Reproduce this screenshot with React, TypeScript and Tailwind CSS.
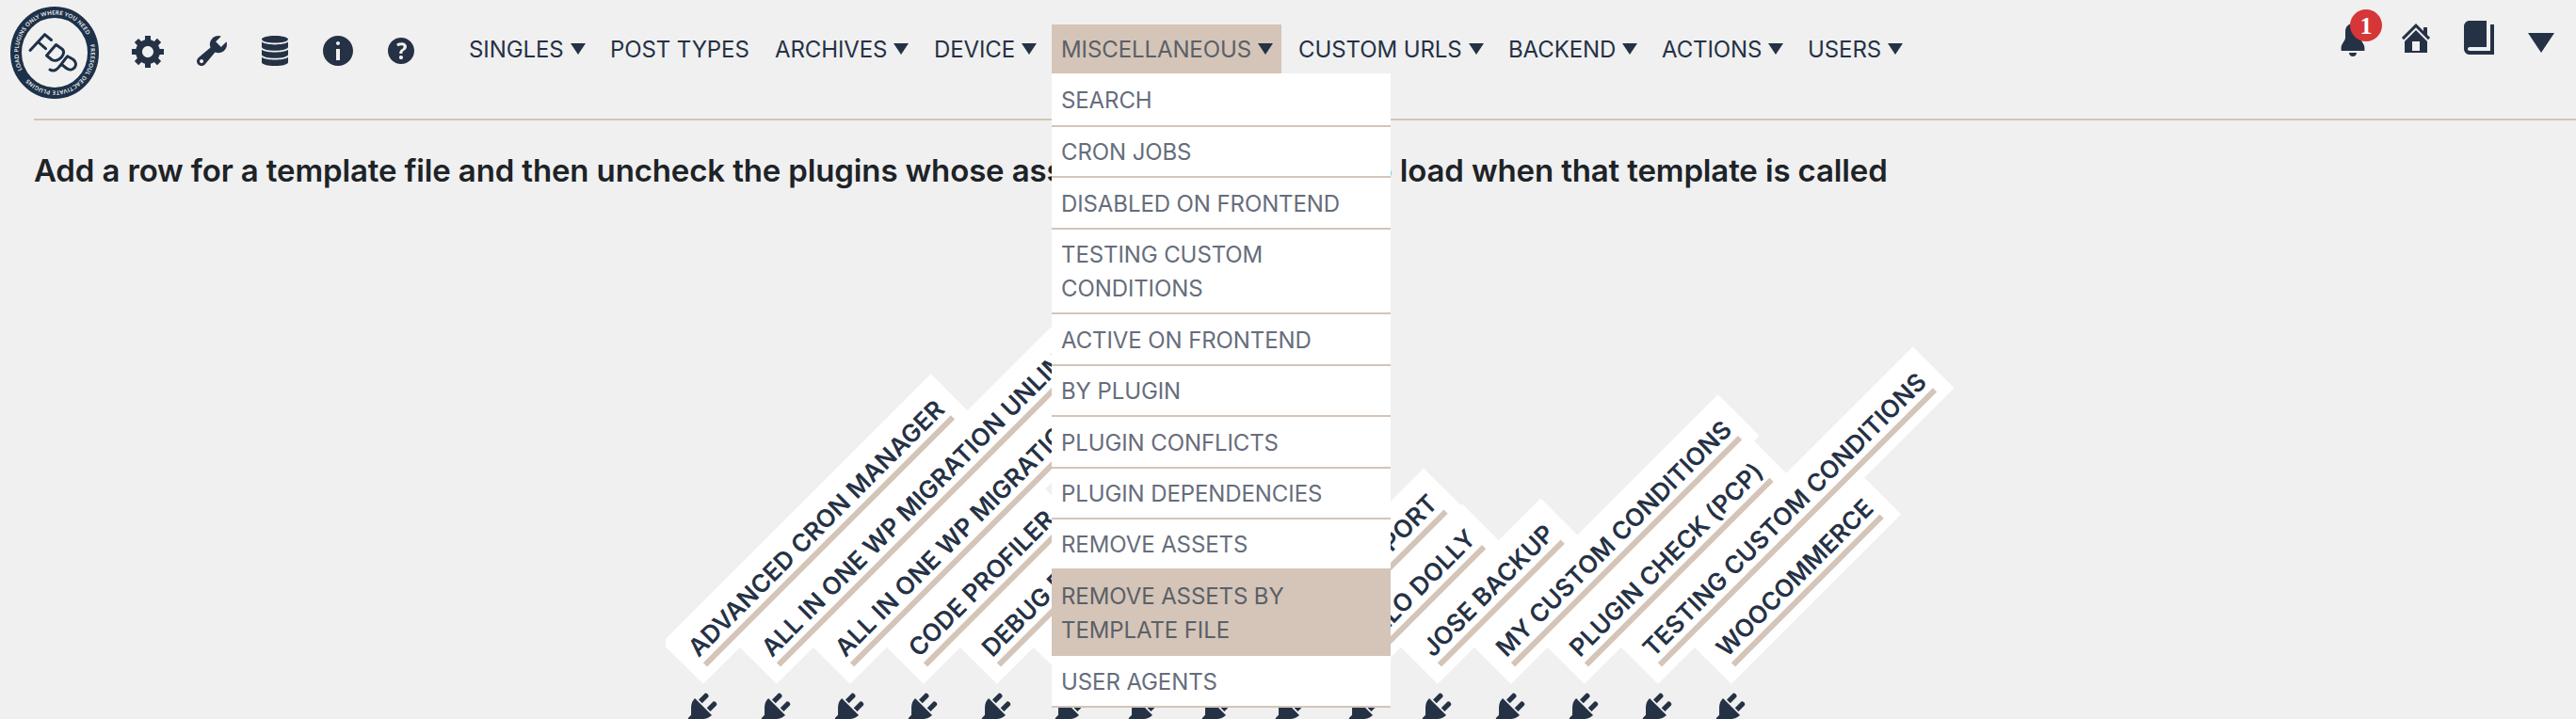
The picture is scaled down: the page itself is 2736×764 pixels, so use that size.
import type { ReactNode } from 'react'

const icons = {
  gear: 'M18 12h-2.18c-.17.7-.44 1.35-.81 1.93l1.54 1.54-2.1 2.1-1.54-1.54c-.58.36-1.23.63-1.91.79V19H8v-2.18c-.68-.16-1.33-.43-1.91-.79l-1.54 1.54-2.12-2.12 1.54-1.54c-.36-.58-.63-1.23-.79-1.91H1V9.03h2.17c.16-.7.44-1.35.8-1.94L2.43 5.55l2.1-2.1 1.54 1.54c.58-.37 1.24-.64 1.93-.81V2h3v2.18c.68.16 1.33.43 1.91.79l1.54-1.54 2.12 2.12-1.54 1.54c.36.59.64 1.24.8 1.94H18V12zm-8.5 1.5c1.66 0 3-1.34 3-3s-1.34-3-3-3-3 1.34-3 3 1.34 3 3 3z',
  wrench: 'M16.68 9.77c-1.34 1.34-3.3 1.67-4.95.99l-5.41 6.52c-.99.99-2.59.99-3.58 0s-.99-2.59 0-3.57l6.52-5.42c-.68-1.65-.35-3.61.99-4.95 1.28-1.28 3.12-1.62 4.72-1.06l-2.89 2.89 2.82 2.82 2.86-2.87c.53 1.58.18 3.39-1.08 4.65zM3.81 16.21c.4.39 1.04.39 1.43 0 .4-.4.4-1.04 0-1.43-.39-.4-1.03-.4-1.43 0-.39.39-.39 1.03 0 1.43z',
  database: 'M10 2c3.9 0 7 .85 7 1.9S13.900 5.8 10 5.8 3 4.950 3 3.900 6.100 2 10 2zM3 5.300C4.200 6.200 6.900 6.700 10 6.700s5.800-.5 7-1.400V8c0 1.050-3.100 1.900-7 1.900S3 9.050 3 8zM3 9.400c1.200.9 3.900 1.400 7 1.400s5.800-.5 7-1.400V12c0 1.050-3.100 1.900-7 1.900S3 13.050 3 12zM3 13.400c1.200.9 3.900 1.400 7 1.400s5.800-.5 7-1.400v2.700c0 1.050-3.100 1.900-7 1.900s-7-.85-7-1.900z',
  info: 'M10 2c4.420 0 8 3.580 8 8s-3.580 8-8 8-8-3.580-8-8 3.580-8 8-8zm1 4c0-.55-.45-1-1-1s-1 .45-1 1 .45 1 1 1 1-.45 1-1zm0 9V9H9v6h2z',
  help: 'M17 10c0-3.870-3.140-7-7-7-3.870 0-7 3.130-7 7s3.130 7 7 7c3.860 0 7-3.130 7-7zm-6.300 1.480H9.140v-.43c0-.38.08-.7.24-.98s.46-.57.88-.89c.41-.29.68-.53.81-.71.14-.18.2-.39.2-.62 0-.25-.09-.44-.28-.58-.19-.13-.45-.19-.79-.19-.58 0-1.250.19-2 .57l-.64-1.280c.87-.49 1.800-.74 2.770-.74.81 0 1.450.2 1.920.58.48.39.71.91.71 1.550 0 .43-.09.8-.29 1.110-.19.32-.57.67-1.110 1.060-.38.28-.61.49-.71.63-.1.15-.15.34-.15.57v.35zm-1.470 2.740c-.18-.17-.27-.42-.27-.73 0-.33.08-.58.26-.75s.43-.25.77-.25c.32 0 .57.09.75.26s.27.42.27.74c0 .3-.09.55-.27.72-.18.18-.43.27-.75.27-.33 0-.58-.09-.76-.26z',
  bell: 'M10 2.500c-2.500 0-4 1.800-4 4.500v3c0 1.500-2.200 3.500-2.200 5.200V17h12.400v-1.800c0-1.700-2.200-3.700-2.200-5.200V7c0-2.700-1.500-4.500-4-4.500zM8 18c0 1.200.9 2 2 2s2-.8 2-2z',
  home: 'M16 8.500l1.530 1.530-1.060 1.060L10 4.600l-6.470 6.490-1.060-1.060L10 2.500l4 4v-2h2v4zm-6-2.460l6 5.990V18H4v-5.970zM12 17v-5H8v5h4z',
  book: 'M16 3h2v16H5c-1.660 0-3-1.340-3-3V4c0-1.660 1.340-3 3-3h9v14H5c-.55 0-1 .45-1 1s.45 1 1 1h11V3z',
  plug: 'M13.110 4.360L9.870 7.600 8 5.730l3.240-3.240c.35-.34 1.050-.2 1.560.32.52.51.66 1.210.31 1.550zm-8 1.770l.91-1.120 9.010 9.010-1.190.84c-.71.71-2.630 1.160-3.820 1.160H6.140L4.900 17.260c-.59.59-1.540.59-2.120 0-.59-.58-.59-1.530 0-2.120l1.240-1.240v-3.880c0-1.130.4-3.190 1.090-3.890zm7.260 3.970l3.240-3.240c.34-.35 1.040-.21 1.550.31.52.51.66 1.210.31 1.550l-3.240 3.250z',
}

function Icon({ name, className = '' }: { name: keyof typeof icons; className?: string }) {
  return (
    <svg viewBox="0 0 20 20" className={`size-10 shrink-0 overflow-visible ${className}`} fill="currentColor" fillRule="evenodd">
      <path d={icons[name]} />
    </svg>
  )
}

function Caret({ className = 'w-4 h-3' }: { className?: string }) {
  return (
    <svg viewBox="0 0 16 12" className={`shrink-0 ${className}`} fill="#253145" preserveAspectRatio="none">
      <path d="M0 0h16L8 12z" />
    </svg>
  )
}

function Logo() {
  return (
    <svg viewBox="0 0 94 98" className="ml-[11px] mt-[7px] w-[94px] h-[98px] shrink-0" fill="none">
      <ellipse cx="47" cy="49" rx="41" ry="43" stroke="#1d3149" strokeWidth="12" />
      <defs>
        <path
          id="ring"
          d="M12.600 67.100A38.500 40.500 0 0 1 47 8.500A38.500 40.500 0 0 1 47 89.500A38.500 40.500 0 0 1 12.600 67.100"
        />
      </defs>
      <g fill="#efefef" fontSize="6" fontWeight="700" fontFamily="Lato, sans-serif">
        <text textLength="123">
          <textPath href="#ring">LOAD PLUGINS ONLY WHERE YOU NEED</textPath>
        </text>
        <text textLength="102">
          <textPath href="#ring" startOffset="134">FREESOUL DEACTIVATE PLUGINS</textPath>
        </text>
      </g>
      <g stroke="#1d3149" strokeWidth="3" strokeLinecap="round" strokeLinejoin="round">
        <path d="M21 46.500L36.500 29.700L43.500 35.500M30.500 38.500L37.500 44.700" />
        <path d="M48.500 40.500L38.500 52L44 56.500C51 60.500 61 49 54.500 44.800Z" />
        <path d="M42 67C49 71.500 53 61.500 60.700 52.800L66.500 56C74 61.500 66 70.500 59.500 65.500L54.500 61.500" />
      </g>
    </svg>
  )
}

const menu = [
  { label: 'SINGLES', w: 'w-[150px]' },
  { label: 'POST TYPES', w: 'w-[175px]', plain: true },
  { label: 'ARCHIVES', w: 'w-[169px]' },
  { label: 'DEVICE', w: 'w-[136px]' },
  { label: 'MISCELLANEOUS', w: 'w-[251px]', active: true },
  { label: 'CUSTOM URLS', w: 'w-[223px]' },
  { label: 'BACKEND', w: 'w-[163px]' },
  { label: 'ACTIONS', w: 'w-[155px]' },
  { label: 'USERS', w: 'w-[122px]' },
]

const dropdown = [
  { label: 'SEARCH', h: 'h-[57px]' },
  { label: 'CRON JOBS', h: 'h-[54px]' },
  { label: 'DISABLED ON FRONTEND', h: 'h-[55px]' },
  { label: 'TESTING CUSTOM CONDITIONS', h: 'h-[90px]' },
  { label: 'ACTIVE ON FRONTEND', h: 'h-[55px]' },
  { label: 'BY PLUGIN', h: 'h-[54px]' },
  { label: 'PLUGIN CONFLICTS', h: 'h-[55px]' },
  { label: 'PLUGIN DEPENDENCIES', h: 'h-[54px]' },
  { label: 'REMOVE ASSETS', h: 'h-[54px]' },
  { label: 'REMOVE ASSETS BY TEMPLATE FILE', h: 'h-[91px]', active: true },
  { label: 'USER AGENTS', h: 'h-[55px]' },
]

const plugins = [
  'ADVANCED CRON MANAGER',
  'ALL IN ONE WP MIGRATION UNLIMITED',
  'ALL IN ONE WP MIGRATION',
  'CODE PROFILER',
  'DEBUG BAR',
  'DUPLICATOR',
  'ELEMENTOR',
  'FDP ADDON',
  'PLUGIN SUPPORT',
  'HELLO DOLLY',
  'JOSE BACKUP',
  'MY CUSTOM CONDITIONS',
  'PLUGIN CHECK (PCP)',
  'TESTING CUSTOM CONDITIONS',
  'WOOCOMMERCE',
]

function NavItem({ w, active, children }: { w: string; active?: boolean; children: ReactNode }) {
  return (
    <li className={`relative flex h-[52px] shrink-0 items-center whitespace-nowrap ${w} ${active ? 'text-[#5b6067]' : ''}`}>
      {children}
    </li>
  )
}

export default function App() {
  return (
    <div className="h-[764px] w-[2736px] overflow-hidden bg-[#f0f0f0] font-['Inter',sans-serif] text-[#253145]">
      {/* TOP BAR */}
      <header className="flex h-[126px] items-start">
        <Logo />
        <div className="ml-[33px] mt-[34px] flex gap-[27px]">
          <Icon name="gear" />
          <Icon name="wrench" />
          <Icon name="database" />
          <Icon name="info" />
          <Icon name="help" />
        </div>

        <ul className="ml-[41px] mt-[26px] flex text-2xl tracking-[-0.1px]">
          {menu.map((item) => (
            <NavItem key={item.label} w={item.w} active={item.active}>
              <span className={`flex h-full items-center gap-[7px] ${item.active ? 'w-[244px] bg-[#d4c5b8] px-2.5' : 'px-[11px]'}`}>
                <span className="pt-0.5">{item.label}</span>
                {!item.plain && <Caret />}
              </span>
              {item.active && (
                <ul className="absolute left-0 top-[52px] z-10 w-[360px] whitespace-normal bg-white text-[#666d7b]">
                  {dropdown.map((sub) => (
                    <li
                      key={sub.label}
                      className={`flex items-center border-b-2 border-[#d4c5b8] pl-2.5 pr-10 pt-0.5 leading-9 ${sub.h} ${sub.active ? 'bg-[#d4c5b8] text-[#5b6067]' : ''}`}
                    >
                      {sub.label}
                    </li>
                  ))}
                </ul>
              )}
            </NavItem>
          ))}
        </ul>

        <div className="ml-auto mr-[23px] mt-5 flex">
          <div className="relative mr-[27px]">
            <Icon name="bell" />
            <span className="absolute left-[17px] -top-[10px] flex size-[34px] items-center justify-center rounded-full bg-[#d63638] font-['Liberation_Serif',serif] text-[26px] font-bold text-white">
              1
            </span>
          </div>
          <Icon name="home" className="mr-[27px]" />
          <Icon name="book" className="mr-[32px]" />
          <Caret className="mt-[15px] h-[21px] w-[28px]" />
        </div>
      </header>

      <div className="ml-9 border-t-2 border-[#d4c5b8]" />
      <h2 className="ml-9 mt-[31px] whitespace-nowrap text-[33px] font-semibold leading-[44px] tracking-[-0.14px] text-[#1d2327]">
        Add a row for a template file and then uncheck the plugins whose assets you do not want to load when that template is called
      </h2>

      {/* PLUGIN COLUMNS */}
      <div className="ml-[707px] h-[561px] w-[1500px] overflow-hidden">
        <div className="flex h-[480px] items-end">
          {plugins.map((name) => (
            <div key={name} className="flex h-0 w-[78px] shrink-0 items-start">
              <div className="-ml-1 h-[61.5px] shrink-0 origin-top-left -rotate-45 bg-white px-4 pt-[13px]">
                <span className="block whitespace-nowrap border-b-6 border-[#d4c5b8] text-[26px] font-semibold leading-[33px] tracking-[0.2px]">
                  {name}
                </span>
              </div>
            </div>
          ))}
        </div>
        <div className="mt-[49px] flex">
          {plugins.map((name) => (
            <div key={name} className="flex w-[78px] shrink-0 pl-[19px]">
              <Icon name="plug" />
            </div>
          ))}
        </div>
      </div>
    </div>
  )
}
